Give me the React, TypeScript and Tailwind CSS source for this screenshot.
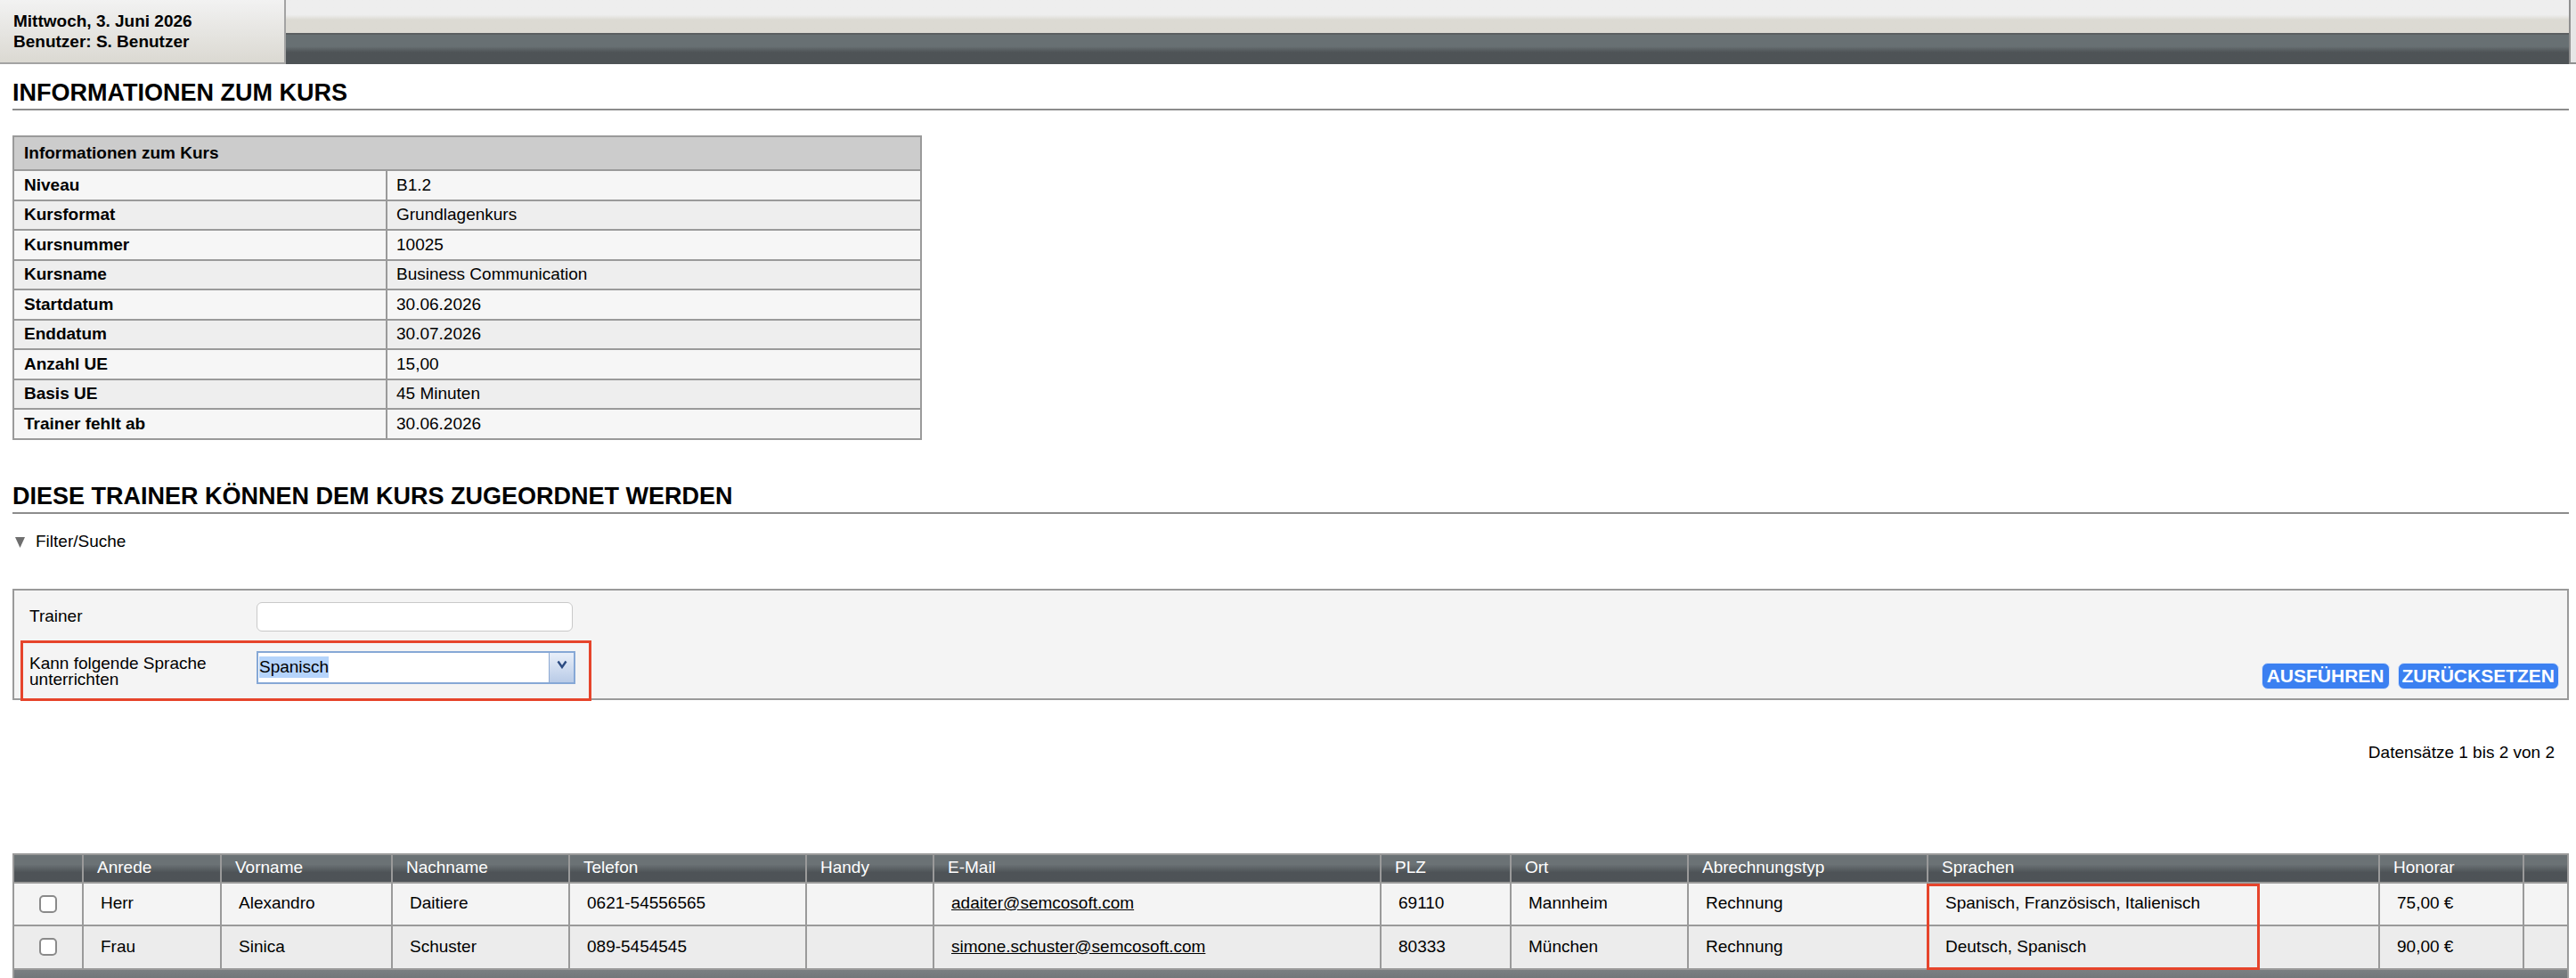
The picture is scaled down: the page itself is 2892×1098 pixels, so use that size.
import React from 'react';

// Kursdaten für die Infotabelle
const kursInfo: [string, string][] = [
  ['Niveau', 'B1.2'],
  ['Kursformat', 'Grundlagenkurs'],
  ['Kursnummer', '10025'],
  ['Kursname', 'Business Communication'],
  ['Startdatum', '30.06.2026'],
  ['Enddatum', '30.07.2026'],
  ['Anzahl UE', '15,00'],
  ['Basis UE', '45 Minuten'],
  ['Trainer fehlt ab', '30.06.2026'],
];

const spalten = ['', 'Anrede', 'Vorname', 'Nachname', 'Telefon', 'Handy', 'E-Mail', 'PLZ', 'Ort', 'Abrechnungstyp', 'Sprachen', 'Honorar', ''];

interface Trainer {
  anrede: string;
  vorname: string;
  nachname: string;
  telefon: string;
  handy: string;
  email: string;
  plz: string;
  ort: string;
  abrechnung: string;
  sprachen: string;
  honorar: string;
}

const trainer: Trainer[] = [
  { anrede: 'Herr', vorname: 'Alexandro', nachname: 'Daitiere', telefon: '0621-54556565', handy: '', email: 'adaiter@semcosoft.com', plz: '69110', ort: 'Mannheim', abrechnung: 'Rechnung', sprachen: 'Spanisch, Französisch, Italienisch', honorar: '75,00 €' },
  { anrede: 'Frau', vorname: 'Sinica', nachname: 'Schuster', telefon: '089-5454545', handy: '', email: 'simone.schuster@semcosoft.com', plz: '80333', ort: 'München', abrechnung: 'Rechnung', sprachen: 'Deutsch, Spanisch', honorar: '90,00 €' },
];

const SectionTitle: React.FC<{ children: React.ReactNode; className?: string }> = ({ children, className }) => (
  <h1 className={`text-[27px] font-bold leading-[32px] pb-[2px] border-b-2 border-[#8c8c8c] text-black ${className ?? ''}`}>
    {children}
  </h1>
);

const TopBar: React.FC = () => (
  <header className="flex h-[72px]">
    <div className="w-[321px] h-[72px] border-r-2 border-b-2 border-[#a3a3a3] bg-linear-to-b from-[#f2f2f2] to-[#dbd9d2] pl-[15px] pt-[12px] text-[19px] font-bold leading-[23px] text-black">
      <div>Mittwoch, 3. Juni 2026</div>
      <div>Benutzer: S. Benutzer</div>
    </div>
    <div className="flex-1 flex flex-col">
      <div className="h-[37px] bg-linear-to-b from-[#eeeeee] from-45% to-[#dcdad3] to-60%" />
      <div className="h-[2px] bg-[#5b5f61]" />
      <div className="flex-1 bg-linear-to-b from-[#687073] from-40% to-[#4e5356] to-60%" />
    </div>
    <div className="w-[8px] h-[72px] border-l-2 border-b-2 border-[#8f8f8f] bg-[#e6e6e6]" />
  </header>
);

const KursTabelle: React.FC = () => (
  <div className="mt-[28px] w-[1021px] grid grid-cols-[417px_1fr] gap-[2px] bg-[#9a9a9a] p-[2px]">
    <div className="col-span-2 h-[36px] bg-[#cccccc] flex items-center pl-[11px] font-bold">Informationen zum Kurs</div>
    {kursInfo.map(([label, wert], i) => (
      <React.Fragment key={label}>
        <div className={`h-[31.5px] flex items-center pl-[11px] font-bold ${i % 2 === 0 ? 'bg-[#f6f6f6]' : 'bg-[#eeeeee]'}`}>{label}</div>
        <div className={`h-[31.5px] flex items-center pl-[10px] ${i % 2 === 0 ? 'bg-[#f6f6f6]' : 'bg-[#eeeeee]'}`}>{wert}</div>
      </React.Fragment>
    ))}
  </div>
);

const FilterBox: React.FC = () => (
  <div className="mt-[41px] bg-[#f4f4f4] border-2 border-[#9a9a9a] pt-[13px]">
    <div className="flex items-center h-[33px] pl-[17px]">
      <span className="w-[255px]">Trainer</span>
      <div className="w-[355px] h-[33px] bg-white border border-[#c9c9c9] rounded-[6px]" />
    </div>
    <div className="flex items-end justify-between mt-[10px] mb-[-3px] pl-[7px] pr-[9px]">
      <div className="flex items-start w-[641px] h-[68px] border-[3px] border-[#e6442b] pl-[7px]">
        <span className="w-[255px] mt-[14px] leading-[18px]">Kann folgende Sprache unterrichten</span>
        <div className="mt-[9px] w-[358px] h-[37px] flex bg-white border-2 border-[#86a8d6]">
          <div className="flex-1 flex items-center pl-[1px]">
            <span className="bg-[#b5d4fb] leading-[24px]">Spanisch</span>
          </div>
          <div className="w-[28px] border-l border-[#8eaad3] bg-linear-to-b from-[#e8eff9] to-[#b9cbe7] flex justify-center pt-[8px]">
            <svg width="12" height="10" viewBox="0 0 12 10">
              <path d="M1.5 1.5 L6 8 L10.5 1.5" fill="none" stroke="#2c4c82" strokeWidth="2.4" />
            </svg>
          </div>
        </div>
      </div>
      <div className="flex gap-[9px] mb-[13px]">
        <button className="h-[30px] px-[5px] rounded-[7px] bg-[#3b80f1] text-white font-bold text-[21px] leading-none border border-[#dbe7fb]">AUSFÜHREN</button>
        <button className="h-[30px] px-[4px] rounded-[7px] bg-[#3b80f1] text-white font-bold text-[21px] leading-none border border-[#dbe7fb]">ZURÜCKSETZEN</button>
      </div>
    </div>
  </div>
);

const TrainerTabelle: React.FC = () => (
  <div className="relative mt-[102px]">
    <div className="grid grid-cols-[76px_153px_190px_197px_264px_141px_500px_144px_197px_267px_505px_160px_1fr] gap-[2px] bg-[#9a9a9a] p-[2px] pb-0">
      {spalten.map((s, i) => (
        <div key={i} className="h-[30px] flex items-center pl-[15px] text-white bg-linear-to-b from-[#6b7275] from-35% to-[#4e5357] to-65%">{s}</div>
      ))}
      {trainer.map((t, i) => {
        const bg = i % 2 === 0 ? 'bg-[#f4f4f4]' : 'bg-[#ececec]';
        const h = i % 2 === 0 ? 'h-[46px]' : 'h-[47px]';
        const werte = [t.anrede, t.vorname, t.nachname, t.telefon, t.handy];
        return (
          <React.Fragment key={t.email}>
            <div className={`${h} ${bg} flex items-center justify-center`}>
              <div className="w-[20px] h-[20px] rounded-[5px] border-2 border-[#8a8a8a] bg-white" />
            </div>
            {werte.map((w, j) => (
              <div key={j} className={`${h} ${bg} flex items-center pl-[19px]`}>{w}</div>
            ))}
            <div className={`${h} ${bg} flex items-center pl-[19px]`}>
              <a href="#" className="underline text-black">{t.email}</a>
            </div>
            {[t.plz, t.ort, t.abrechnung, t.sprachen, t.honorar, ''].map((w, j) => (
              <div key={`b${j}`} className={`${h} ${bg} flex items-center pl-[19px]`}>{w}</div>
            ))}
          </React.Fragment>
        );
      })}
      <div className="col-span-full h-[40px] bg-linear-to-b from-[#7a7f82] to-[#5a5f62]" />
    </div>
    {/* Markierung der Sprachen-Spalte */}
    <div className="absolute left-[2149px] top-[34px] w-[374px] h-[97px] border-[3px] border-[#e6442b] pointer-events-none" />
  </div>
);

export default function App() {
  return (
    <div className="bg-white min-h-screen text-[19px] text-black font-['Liberation_Sans',Arial,sans-serif]">
      <TopBar />
      <main className="pl-[14px] pr-[8px]">
        <SectionTitle className="mt-[16px]">INFORMATIONEN ZUM KURS</SectionTitle>
        <KursTabelle />
        <SectionTitle className="mt-[47px]">DIESE TRAINER KÖNNEN DEM KURS ZUGEORDNET WERDEN</SectionTitle>

        <div className="mt-[21px] flex items-center h-[22px] pl-[3px]">
          <svg width="11" height="12" viewBox="0 0 11 12" className="mr-[12px]">
            <path d="M0 0 H11 L5.5 12 Z" fill="#6e6e6e" />
          </svg>
          <span>Filter/Suche</span>
        </div>

        <FilterBox />

        <div className="mt-[48px] text-right pr-[16px] leading-[22px]">Datensätze 1 bis 2 von 2</div>

        <TrainerTabelle />
      </main>
    </div>
  );
}
